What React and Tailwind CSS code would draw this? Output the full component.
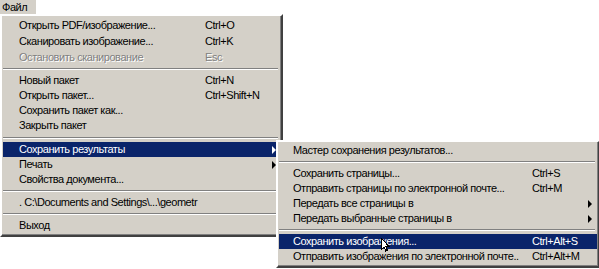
import React from "react";

const FONT = "font-['Liberation_Sans','Arial',sans-serif] text-[11px] leading-none tracking-[-0.45px]";

function Arrow({ white }) {
  return (
    <span
      className={
        "block w-0 h-0 border-y-[4px] border-y-transparent border-l-[4px] " +
        (white ? "border-l-white" : "border-l-black")
      }
    />
  );
}

function Sep({ h }) {
  return (
    <div className={"flex flex-col justify-center " + h}>
      <div className="h-px bg-[#808080] mr-[2px]" />
      <div className="h-px bg-white mr-[2px]" />
    </div>
  );
}

function Row({ item, textW, pl, arrowPr }) {
  const active = item.active;
  const disabled = item.disabled;
  const color = active
    ? "bg-[#0a246a] text-white"
    : disabled
    ? "text-[#808080] [text-shadow:1px_1px_0_#ffffff]"
    : "text-black";
  return (
    <div className={"flex items-center " + item.h + " " + color}>
      <div className={"shrink-0 whitespace-nowrap " + pl + " " + textW}>{item.t}</div>
      <div className="flex-1 whitespace-nowrap">{item.s || ""}</div>
      {item.arrow ? (
        <div className={arrowPr}>
          <Arrow white={active} />
        </div>
      ) : null}
    </div>
  );
}

const mainItems = [
  { t: "Открыть PDF/изображение...", s: "Ctrl+O", h: "h-[16px]" },
  { t: "Сканировать изображение...", s: "Ctrl+K", h: "h-[16px]" },
  { t: "Остановить сканирование", s: "Esc", disabled: true, h: "h-[16px]" },
  { sep: true, h: "h-[8px]" },
  { t: "Новый пакет", s: "Ctrl+N", h: "h-[15px]" },
  { t: "Открыть пакет...", s: "Ctrl+Shift+N", h: "h-[15px]" },
  { t: "Сохранить пакет как...", h: "h-[15px]" },
  { t: "Закрыть пакет", h: "h-[15px]" },
  { sep: true, h: "h-[9px]" },
  { t: "Сохранить результаты", arrow: true, active: true, h: "h-[15px]" },
  { t: "Печать", arrow: true, h: "h-[15px]" },
  { t: "Свойства документа...", h: "h-[15px]" },
  { sep: true, h: "h-[8px]" },
  { t: ". C:\\Documents and Settings\\...\\geometr", h: "h-[15px]" },
  { sep: true, h: "h-[8px]" },
  { t: "Выход", h: "h-[15px]" },
];

const subItems = [
  { t: "Мастер сохранения результатов...", h: "h-[15px]" },
  { sep: true, h: "h-[8px]" },
  { t: "Сохранить страницы...", s: "Ctrl+S", h: "h-[15px]" },
  { t: "Отправить страницы по электронной почте...", s: "Ctrl+M", h: "h-[15px]" },
  { t: "Передать все страницы в", arrow: true, h: "h-[15px]" },
  { t: "Передать выбранные страницы в", arrow: true, h: "h-[15px]" },
  { sep: true, h: "h-[8px]" },
  { t: "Сохранить изображения...", s: "Ctrl+Alt+S", active: true, h: "h-[15px]" },
  { t: "Отправить изображения по электронной почте..", s: "Ctrl+Alt+M", h: "h-[15px]" },
];

function Cursor() {
  return (
    <svg
      className="absolute left-[381px] top-[238px]"
      width="9"
      height="14"
      viewBox="0 0 9 14"
    >
      <path
        d="M0.5 0.5 L0.5 11.5 L3 9 L4.8 13.2 L6.4 12.5 L4.7 8.5 L8 8.5 Z"
        fill="#ffffff"
        stroke="#000000"
        strokeWidth="1"
        shapeRendering="crispEdges"
      />
    </svg>
  );
}

export default function App() {
  return (
    <div className={"relative w-[599px] h-[269px] overflow-hidden bg-white " + FONT}>
      <div className="flex h-[14px]">
        <div className="w-[36px] h-[14px] bg-[#d4d0c8] flex items-center pl-[2px] text-black">
          Файл
        </div>
      </div>
      <div className="w-[283px] bg-[#d4d0c8] border-t-2 border-l-2 border-white border-r-2 border-b-2 border-r-[#404040] border-b-[#404040]">
        <div className="border-r border-b border-[#808080] py-px pl-px">
          {mainItems.map((it, i) =>
            it.sep ? (
              <Sep key={i} h={it.h} />
            ) : (
              <Row key={i} item={it} pl="pl-[16px]" textW="w-[202px]" arrowPr="pr-[4px]" />
            )
          )}
        </div>
      </div>
      <div className="absolute left-[276px] top-[140px] w-[324px] bg-[#d4d0c8] border-t-2 border-l-2 border-white border-r-2 border-b-2 border-r-[#404040] border-b-[#404040]">
        <div className="border-r border-b border-[#808080] py-px pl-px">
          {subItems.map((it, i) =>
            it.sep ? (
              <Sep key={i} h={it.h} />
            ) : (
              <Row key={i} item={it} pl="pl-[14px]" textW="w-[253px]" arrowPr="pr-[5px]" />
            )
          )}
        </div>
      </div>
      <Cursor />
    </div>
  );
}
